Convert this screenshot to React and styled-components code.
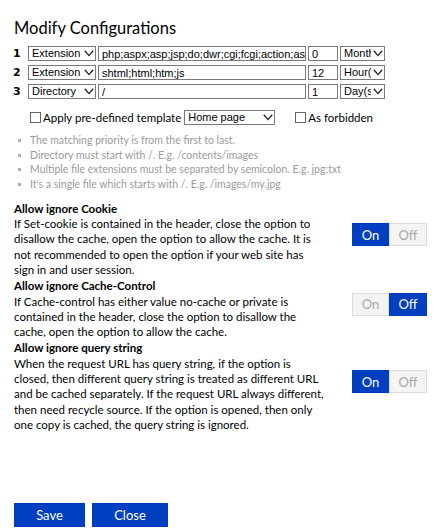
import React, { useState } from 'react';
import styled, { createGlobalStyle } from 'styled-components';

const GlobalStyle = createGlobalStyle`
    html, body {
        margin: 0;
        padding: 0;
        background: #ffffff;
    }
    body {
        font-family: Lato, "Noto Sans", sans-serif;
        color: #000000;
    }
`;

const BLUE = '#0040c0';

const Page = styled.div`
    width: 435px;
    height: 528px;
    box-sizing: border-box;
    padding: 16px 8px 0 14px;
    display: flex;
    flex-direction: column;
    overflow: hidden;
`;

const Title = styled.h1`
    margin: 0 0 6px;
    font-size: 16.5px;
    font-weight: 400;
    line-height: 24px;
`;

const Rules = styled.div`
    display: flex;
    flex-direction: column;
    gap: 4px;
`;

const RuleRow = styled.div`
    display: flex;
    align-items: center;
    height: 15px;
`;

const RowNo = styled.span`
    width: 15px;
    font-family: "DejaVu Sans", sans-serif;
    font-weight: 700;
    font-size: 11px;
    margin-left: -1px;
`;

const SelectBox = styled.div`
    position: relative;
    width: ${({ width }) => width}px;
    height: 15px;
    margin-right: 2px;
    flex-shrink: 0;
    svg {
        position: absolute;
        right: 2px;
        top: 4px;
        pointer-events: none;
    }
`;

const NativeSelect = styled.select`
    display: block;
    appearance: none;
    width: 100%;
    height: 100%;
    box-sizing: border-box;
    border: 1px solid #7a7a7a;
    border-radius: 0;
    background: #ffffff;
    margin: 0;
    padding: 0 13px 0 3px;
    font-family: "Liberation Sans", Arial, sans-serif;
    font-size: 11px;
    line-height: 13px;
    color: #000000;
    outline: none;
`;

const TextInput = styled.input`
    display: block;
    width: ${({ width }) => width}px;
    height: 15px;
    box-sizing: border-box;
    border: 1px solid #7a7a7a;
    margin: 0 2px 0 0;
    padding: 0 0 0 3px;
    font-family: "Liberation Sans", Arial, sans-serif;
    font-size: 11px;
    color: #000000;
    outline: none;
    flex-shrink: 0;
`;

const Chevron = () => (
    <svg width="10" height="7" viewBox="0 0 10 7">
        <path d="M0.8 0.8 L5 5.6 L9.2 0.8" fill="none" stroke="#222" strokeWidth="1.3" />
    </svg>
);

const Select = ({ width, value, options }) => (
    <SelectBox width={width}>
        <NativeSelect defaultValue={value}>
            {options.map(o => (
                <option key={o}>{o}</option>
            ))}
        </NativeSelect>
        <Chevron />
    </SelectBox>
);

const TemplateRow = styled.div`
    display: flex;
    align-items: center;
    margin: 11px 0 0 16px;
    font-size: 11.5px;
    height: 15px;
`;

const Check = styled.span`
    display: inline-block;
    width: 9px;
    height: 9px;
    border: 1px solid #666;
    margin-right: 2px;
`;

const CheckLabel = styled.label`
    display: flex;
    align-items: center;
    margin-right: ${({ gapRight }) => gapRight || 0}px;
    margin-left: ${({ gapLeft }) => gapLeft || 0}px;
`;

const Notes = styled.ul`
    margin: 8px 0 0 4px;
    padding: 0;
    list-style: none;
    color: #9a9a9a;
    font-size: 10.5px;
    line-height: 14.7px;
`;

const Note = styled.li`
    display: flex;
    &::before {
        content: '';
        width: 3px;
        height: 3px;
        background: #b0b0b0;
        margin: 6px 9px 0 0;
        flex-shrink: 0;
    }
`;

const Options = styled.div`
    margin-top: 9px;
    display: flex;
    flex-direction: column;
    gap: 1px;
`;

const OptionRow = styled.div`
    display: flex;
    align-items: center;
`;

const OptionText = styled.div`
    width: 330px;
    font-size: 11.5px;
    line-height: 15.3px;
    white-space: nowrap;
`;

const OptionTitle = styled.div`
    font-weight: 700;
`;

const Toggle = styled.div`
    display: flex;
    margin-left: auto;
    margin-bottom: 9px;
`;

const ToggleButton = styled.button`
    width: ${({ width }) => width}px;
    height: 23px;
    box-sizing: border-box;
    border: 1px solid ${({ active }) => (active ? BLUE : '#dcdcdc')};
    background: ${({ active }) => (active ? BLUE : '#f4f4f4')};
    color: ${({ active }) => (active ? '#ffffff' : '#a8a8a8')};
    font-family: Lato, "Noto Sans", sans-serif;
    font-size: 13px;
    padding: 0;
    cursor: pointer;
`;

const Footer = styled.div`
    margin-top: auto;
    display: flex;
    gap: 7px;
    padding-bottom: 1px;
`;

const Button = styled.button`
    width: ${({ width }) => width}px;
    height: 24px;
    border: none;
    background: ${BLUE};
    color: #ffffff;
    font-family: Lato, "Noto Sans", sans-serif;
    font-size: 13px;
    padding: 0;
`;

const rules = [
    { type: 'Extension', value: 'php;aspx;asp;jsp;do;dwr;cgi;fcgi;action;ashx;axd', num: '0', unit: 'Month(s)' },
    { type: 'Extension', value: 'shtml;html;htm;js', num: '12', unit: 'Hour(s)' },
    { type: 'Directory', value: '/', num: '1', unit: 'Day(s)' },
];

const options = [
    {
        title: 'Allow ignore Cookie',
        lines: [
            'If Set-cookie is contained in the header, close the option to',
            'disallow the cache, open the option to allow the cache. It is',
            'not recommended to open the option if your web site has',
            'sign in and user session.',
        ],
        on: true,
    },
    {
        title: 'Allow ignore Cache-Control',
        lines: [
            'If Cache-control has either value no-cache or private is',
            'contained in the header, close the option to disallow the',
            'cache, open the option to allow the cache.',
        ],
        on: false,
    },
    {
        title: 'Allow ignore query string',
        lines: [
            'When the request URL has query string, if the option is',
            'closed, then different query string is treated as different URL',
            'and be cached separately. If the request URL always different,',
            'then need recycle source. If the option is opened, then only',
            'one copy is cached, the query string is ignored.',
        ],
        on: true,
    },
];

const Option = ({ title, lines, on }) => {
    const [value, setValue] = useState(on);
    return (
        <OptionRow>
            <OptionText>
                <OptionTitle>{title}</OptionTitle>
                {lines.map((l, i) => (
                    <React.Fragment key={i}>
                        {i > 0 && <br />}
                        {l}
                    </React.Fragment>
                ))}
            </OptionText>
            <Toggle>
                <ToggleButton width={37} active={value} onClick={() => setValue(true)}>
                    On
                </ToggleButton>
                <ToggleButton width={38} active={!value} onClick={() => setValue(false)}>
                    Off
                </ToggleButton>
            </Toggle>
        </OptionRow>
    );
};

export default function App() {
    return (
        <>
            <GlobalStyle />
            <Page>
                <Title>Modify Configurations</Title>
                <Rules>
                    {rules.map((r, i) => (
                        <RuleRow key={i}>
                            <RowNo>{i + 1}</RowNo>
                            <Select width={68} value={r.type} options={['Extension', 'Directory', 'File']} />
                            <TextInput width={208} defaultValue={r.value} />
                            <TextInput width={30} defaultValue={r.num} />
                            <Select width={45} value={r.unit} options={['Month(s)', 'Day(s)', 'Hour(s)', 'Minute(s)']} />
                        </RuleRow>
                    ))}
                </Rules>
                <TemplateRow>
                    <CheckLabel gapRight={3}>
                        <Check />
                        Apply pre-defined template
                    </CheckLabel>
                    <Select width={91} value="Home page" options={['Home page', 'All files']} />
                    <CheckLabel gapLeft={18}>
                        <Check />
                        As forbidden
                    </CheckLabel>
                </TemplateRow>
                <Notes>
                    <Note>The matching priority is from the first to last.</Note>
                    <Note>Directory must start with /. E.g. /contents/images</Note>
                    <Note>Multiple file extensions must be separated by semicolon. E.g. jpg;txt</Note>
                    <Note>It's a single file which starts with /. E.g. /images/my.jpg</Note>
                </Notes>
                <Options>
                    {options.map(o => (
                        <Option key={o.title} {...o} />
                    ))}
                </Options>
                <Footer>
                    <Button width={71}>Save</Button>
                    <Button width={76}>Close</Button>
                </Footer>
            </Page>
        </>
    );
}
